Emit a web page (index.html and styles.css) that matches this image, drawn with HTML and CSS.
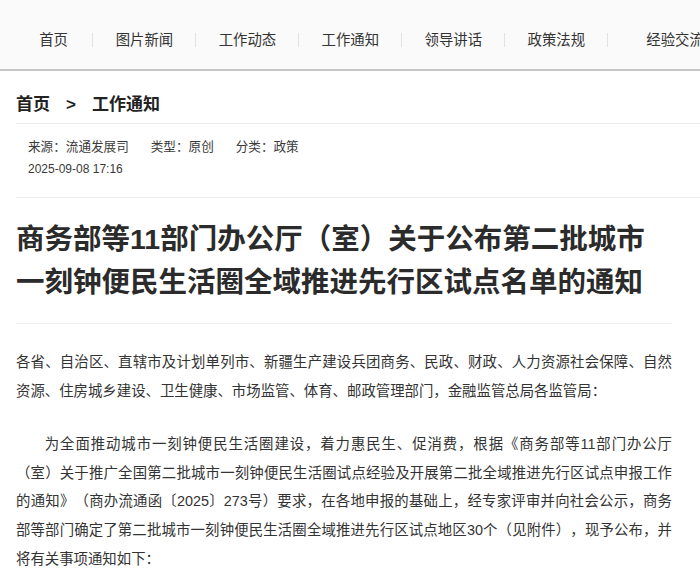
FILE: index.html
```html
<!DOCTYPE html>
<html lang="zh-CN">
<head>
  <meta charset="UTF-8">
  <meta name="viewport" content="width=device-width, initial-scale=1.0">
  <title>工作通知</title>
  <link rel="stylesheet" href="styles.css">
</head>
<body>
  <nav class="topnav">
    <ul class="nav-list">
      <li class="nav-item"><a href="#">首页</a></li>
      <li class="nav-item"><a href="#">图片新闻</a></li>
      <li class="nav-item"><a href="#">工作动态</a></li>
      <li class="nav-item"><a href="#">工作通知</a></li>
      <li class="nav-item"><a href="#">领导讲话</a></li>
      <li class="nav-item"><a href="#">政策法规</a></li>
      <li class="nav-item nav-item-last"><a href="#">经验交流</a></li>
    </ul>
  </nav>

  <div class="crumbs">
    <a href="#">首页</a><span class="crumb-sep">&gt;</span><a href="#">工作通知</a>
  </div>

  <div class="meta">
    <div class="meta-row">
      <span>来源：流通发展司</span>
      <span>类型：原创</span>
      <span>分类：政策</span>
    </div>
    <div class="meta-date">2025-09-08 17:16</div>
  </div>

  <h1 class="article-title">商务部等11部门办公厅（室）关于公布第二批城市一刻钟便民生活圈全域推进先行区试点名单的通知</h1>

  <div class="article-body">
    <p>各省、自治区、直辖市及计划单列市、新疆生产建设兵团商务、民政、财政、人力资源社会保障、自然资源、住房城乡建设、卫生健康、市场监管、体育、邮政管理部门，金融监管总局各监管局：</p>
    <p class="indent">为全面推动城市一刻钟便民生活圈建设，着力惠民生、促消费，根据《商务部等11部门办公厅（室）关于推广全国第二批城市一刻钟便民生活圈试点经验及开展第二批全域推进先行区试点申报工作的通知》（商办流通函〔2025〕273号）要求，在各地申报的基础上，经专家评审并向社会公示，商务部等部门确定了第二批城市一刻钟便民生活圈全域推进先行区试点地区30个（见附件），现予公布，并将有关事项通知如下：</p>
  </div>
</body>
</html>
```

FILE: styles.css
```css
body {
  margin: 0;
  font-family: "Liberation Sans", "Noto Sans CJK SC", sans-serif;
  color: #333;
  background-color: #fff;
  text-spacing-trim: space-all;
}

a {
  color: inherit;
  text-decoration: none;
}

/* top navigation */
.topnav {
  height: 36px;
  padding-top: 33px;
  background-color: #fafafa;
  border-bottom: 2px solid #c6c6c6;
  overflow: hidden;
}

.nav-list {
  display: flex;
  list-style: none;
  margin: 0;
  padding: 0 0 0 17px;
  white-space: nowrap;
}

.nav-item {
  padding: 0 22.2px;
  font-size: 14.4px;
  line-height: 14px;
  border-left: 1px solid #e2e2e2;
}

.nav-item:first-child {
  border-left: none;
  padding-right: 24.5px;
}

.nav-item-last {
  padding-left: 38px;
}

/* breadcrumb */
.crumbs {
  margin-left: 16px;
  padding: 22px 0 6px;
  font-size: 17px;
  font-weight: bold;
  line-height: 24px;
  color: #222;
  border-bottom: 1px solid #ebebeb;
}

.crumb-sep {
  margin: 0 16px;
}

/* article info */
.meta {
  margin-left: 16px;
  padding: 13px 12px 17px;
  font-size: 12.6px;
  line-height: 21.6px;
  color: #3a3a3a;
  border-bottom: 1px solid #ebebeb;
}

.meta-row {
  display: flex;
  gap: 22px;
}

.meta-date {
  font-size: 12px;
}

.article-title {
  margin: 0 28px 0 16px;
  padding: 20px 0 19px;
  font-size: 28.5px;
  line-height: 43px;
  font-weight: bold;
  color: #2b2b2b;
  border-bottom: 1px solid #eee;
}

.article-body {
  margin: 0 28px 0 16px;
  padding-top: 24px;
  font-size: 14.4px;
  line-height: 28.8px;
  text-align: justify;
}

.article-body p {
  margin: 0 0 24px;
}

.indent {
  text-indent: 2em;
}
```
